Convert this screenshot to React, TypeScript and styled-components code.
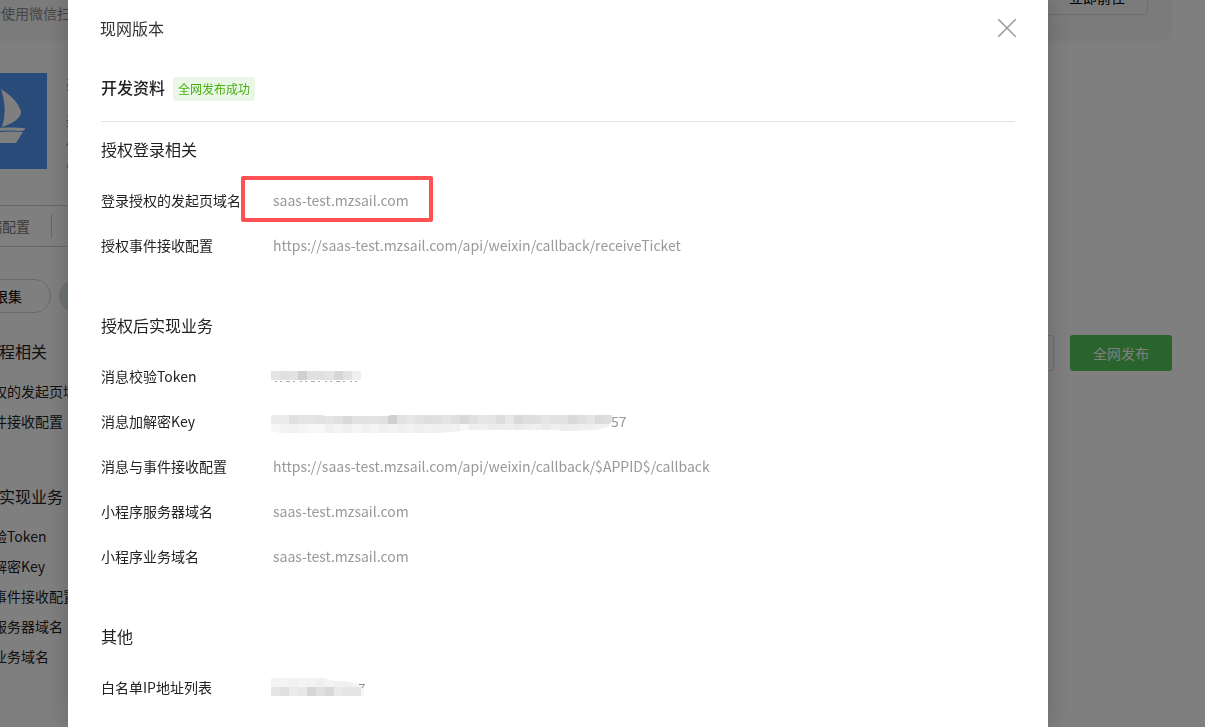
import React from 'react';
import styled, { createGlobalStyle } from 'styled-components';

const Global = createGlobalStyle`
  * { box-sizing: border-box; }
  body {
    margin: 0;
    background: #fff;
    color: #000;
    font-family: "Noto Sans CJK SC", sans-serif;
    font-size: 14px;
    line-height: 20px;
  }
  h1, h2, h3, p, dl, dt, dd { margin: 0; font-weight: 400; }
  button { font-family: inherit; cursor: pointer; }
`;

const Viewport = styled.div`
  position: relative;
  height: 100vh;
  overflow: hidden;
`;

const Page = styled.main`
  margin: -47px 33px 0 -49px;
`;

const Banner = styled.section`
  display: flex;
  align-items: center;
  justify-content: space-between;
  height: 88px;
  padding: 0 24px 0 36px;
  border-radius: 8px;
  background: #f7f7f7;
`;

const BannerText = styled.div`
  padding-top: 32px;
  color: #8a8a8a;
  line-height: 24px;
`;

const OutlineButton = styled.button`
  height: 36px;
  padding: 0 22px;
  border: 1px solid #dcdcdc;
  border-radius: 3px;
  background: transparent;
  color: #000;
  font-size: 14px;
`;

const Profile = styled.section`
  display: flex;
  gap: 19px;
  margin-top: 32px;
`;

const Logo = styled.svg`
  flex: none;
  width: 96px;
  height: 96px;
`;

const ProfileText = styled.div`
  display: grid;
  grid-template-rows: 36px 22px 22px 16px;
  color: #9a6a3a;
`;

const TabBar = styled.nav`
  display: flex;
  align-items: center;
  height: 42px;
  margin: 36px 160px 0 0;
  border: solid #d0d0d0;
  border-width: 1px 0;
`;

const Tab = styled.a`
  padding: 2px 21px 2px 23px;
  border-right: 1px solid #d0d0d0;
  color: #777;
  text-decoration: none;
`;

const Pills = styled.div`
  display: flex;
  gap: 8px;
  margin-top: 32px;
`;

const Pill = styled.button<{ $on?: boolean }>`
  height: 34px;
  padding: 0 28px;
  border: 1px solid ${(p) => (p.$on ? '#dcebdc' : '#d4d4d4')};
  border-radius: 17px;
  background: ${(p) => (p.$on ? '#dcebdc' : 'transparent')};
  color: #000;
  font-size: 14px;
`;

const PageHeading = styled.div`
  display: flex;
  justify-content: space-between;
  height: 36px;
  margin-top: 22px;
`;

const PageTitle = styled.h2`
  font-size: 16px;
  line-height: 32px;
  color: #222;
`;

const Actions = styled.div`
  display: flex;
  gap: 16px;
`;

const PublishButton = styled.button`
  height: 36px;
  padding: 0 23px;
  border: 0;
  border-radius: 3px;
  background: #50c856;
  color: #fff;
  font-size: 14px;
`;

const PageList = styled.div`
  display: grid;
  gap: 10px;
  margin: 10px 0 49px;
  color: #222;
`;

const Backdrop = styled.div`
  position: fixed;
  inset: 0;
  display: flex;
  padding: 0 157px 0 68px;
  background: rgba(0, 0, 0, 0.5);
`;

const Dialog = styled.section`
  flex: 1;
  padding: 16px 32px 0;
  background: #fff;
  box-shadow: 0 0 24px rgba(0, 0, 0, 0.2);
  color: #222;
  overflow: hidden;
`;

const DialogHeader = styled.header`
  display: flex;
  align-items: center;
  justify-content: space-between;
  height: 24px;
`;

const DialogTitle = styled.h1`
  font-size: 16px;
  line-height: 24px;
  color: #353535;
`;

const CloseButton = styled.button`
  display: flex;
  padding: 0;
  border: 0;
  background: none;
  color: #999;
`;

const DialogBody = styled.div`
  padding: 0 1px;
`;

const Summary = styled.div`
  display: flex;
  align-items: flex-start;
  gap: 8px;
  margin-top: 37px;
  padding-bottom: 20px;
  border-bottom: 1px solid #e4e5e7;
`;

const SummaryTitle = styled.h2`
  font-size: 16px;
  font-weight: 500;
  line-height: 20px;
`;

const Tag = styled.span`
  padding: 0 5px;
  border-radius: 3px;
  background: #ebf7e6;
  color: #46b011;
  font-size: 12px;
  line-height: 24px;
`;

const Group = styled.section`
  margin: 15px 0 58px;
`;

const GroupTitle = styled.h3`
  margin-bottom: 29px;
  font-size: 16px;
  line-height: 24px;
`;

const Rows = styled.dl`
  display: grid;
  gap: 25px;
`;

const Row = styled.div`
  display: flex;
  align-items: center;
  height: 20px;
`;

const Label = styled.dt`
  width: 172px;
  white-space: nowrap;
`;

const Value = styled.dd`
  position: relative;
  display: flex;
  align-items: center;
  color: #999;
`;

const Highlight = styled.span`
  position: absolute;
  inset: -14px -24px -12px -32px;
  border: 4px solid #ff5053;
  border-radius: 2px;
`;

const Mosaic = styled.svg`
  flex: none;
  margin: 0 -2px;
`;

const CELL = 9;

type Shade = { top: number[]; bottom: number[] };

const gray = (v: number) => `rgb(${v}, ${v}, ${v})`;

const Cells = ({ top, bottom }: Shade) => (
  <>
    {[top, bottom].map((row, r) =>
      row.map((v, i) => (
        <rect key={`${r}-${i}`} x={i * CELL} y={r * CELL} width={CELL} height={CELL} fill={gray(v)} />
      )),
    )}
  </>
);

const TOKEN = [228, 224, 226, 208, 224, 224, 228, 215, 226, 240];
const KEY: Shade = {
  top: [236, 236, 224, 228, 229, 226, 229, 224, 218, 226, 226, 227, 225, 208, 226, 231, 226, 223, 224, 229, 223, 216, 224, 231, 229, 221, 231, 218, 222, 223, 229, 226, 226, 218, 223, 229, 219, 221],
  bottom: [246, 243, 241, 245, 247, 248, 240, 244, 240, 245, 241, 244, 240, 243, 240, 242, 238, 241, 240, 240, 241, 248, 238, 240, 236, 237, 238, 235, 238, 240, 235, 240, 236, 237, 240, 238, 241, 241],
};
const IP: Shade = {
  top: [243, 244, 241, 244, 243, 240, 243, 240, 241, 243, 244],
  bottom: [229, 224, 235, 232, 214, 224, 216, 233, 229, 229, 247],
};

const TokenMosaic = () => (
  <Mosaic width="92" height="16" viewBox="0 0 92 16" aria-label="已隐藏">
    <g transform="translate(0 3)">
      <Cells top={TOKEN} bottom={[]} />
      <path d="M4 10.500H87" stroke="#aaa" strokeDasharray="2 3 2 4 4 3 2 5" />
    </g>
  </Mosaic>
);

const KeyMosaic = () => (
  <Mosaic width="342" height="24" viewBox="0 0 342 24" aria-label="已隐藏">
    <clipPath id="keyShape">
      <path d="M0 0H50L54 1H116L120 0H341Q342 8 335 13Q325 16 290 16V15H198Q190 16 168 18H8Q2 17 0 14Z" />
    </clipPath>
    <g transform="translate(0 6)" clipPath="url(#keyShape)">
      <Cells {...KEY} />
    </g>
  </Mosaic>
);

const IpMosaic = () => (
  <Mosaic width="96" height="18" viewBox="0 0 96 18" aria-label="已隐藏">
    <clipPath id="ipShape">
      <path d="M0 0H52L64 3H74L88 6L93 10V18H0Z" />
    </clipPath>
    <g clipPath="url(#ipShape)">
      <Cells {...IP} />
    </g>
    <path d="M88 6.500H93.500L91 10" fill="none" stroke="#888" />
  </Mosaic>
);

const BoatLogo = () => (
  <Logo viewBox="0 0 96 96" role="img" aria-label="帆船">
    <rect width="96" height="96" fill="#5097f2" />
    <path d="M50 16Q66 26 70 38Q71 47 51 54Q57 36 50 16Z" fill="#fff" />
    <path d="M44 22Q32 36 28 52H44Z" fill="#fff" />
    <path d="M22 58Q50 53 74 55Q74 58 70 58Q46 56 22 62Z" fill="#fff" />
    <path d="M22 63Q50 57 72 59L65 70H32Z" fill="#fff" />
  </Logo>
);

type Item = { label: string; value: React.ReactNode };

const groups: { title: string; items: Item[] }[] = [
  {
    title: '授权登录相关',
    items: [
      { label: '登录授权的发起页域名', value: <>saas-test.mzsail.com<Highlight /></> },
      { label: '授权事件接收配置', value: 'https://saas-test.mzsail.com/api/weixin/callback/receiveTicket' },
    ],
  },
  {
    title: '授权后实现业务',
    items: [
      { label: '消息校验Token', value: <TokenMosaic /> },
      { label: '消息加解密Key', value: <><KeyMosaic />57</> },
      { label: '消息与事件接收配置', value: 'https://saas-test.mzsail.com/api/weixin/callback/$APPID$/callback' },
      { label: '小程序服务器域名', value: 'saas-test.mzsail.com' },
      { label: '小程序业务域名', value: 'saas-test.mzsail.com' },
    ],
  },
  { title: '其他', items: [{ label: '白名单IP地址列表', value: <IpMosaic /> }] },
];

export default function App() {
  return (
    <Viewport>
      <Global />
      <Page>
        <Banner>
          <BannerText>请使用微信扫</BannerText>
          <OutlineButton>立即前往</OutlineButton>
        </Banner>
        <Profile>
          <BoatLogo />
          <ProfileText>
            <span>美</span>
            <span>美</span>
            <span>小</span>
            <span>小</span>
          </ProfileText>
        </Profile>
        <TabBar>
          <Tab href="#config">前端配置</Tab>
        </TabBar>
        <Pills>
          <Pill>权限集</Pill>
          <Pill $on aria-label="权限集" />
        </Pills>
        <PageHeading>
          <PageTitle>授权流程相关</PageTitle>
          <Actions>
            <OutlineButton aria-label="编辑" />
            <PublishButton>全网发布</PublishButton>
          </Actions>
        </PageHeading>
        <PageList>
          <p>登录授权的发起页域名</p>
          <p>授权事件接收配置</p>
        </PageList>
        <PageHeading>
          <PageTitle>授权后实现业务</PageTitle>
        </PageHeading>
        <PageList>
          {groups[1].items.map((item) => (
            <p key={item.label}>{item.label}</p>
          ))}
        </PageList>
      </Page>
      <Backdrop>
        <Dialog role="dialog" aria-modal="true" aria-labelledby="dialogTitle">
          <DialogHeader>
            <DialogTitle id="dialogTitle">现网版本</DialogTitle>
            <CloseButton aria-label="关闭">
              <svg width="18" height="18" viewBox="0 0 18 18" fill="none" stroke="currentColor" strokeWidth="1.500">
                <path d="M0 0L18 18M18 0L0 18" />
              </svg>
            </CloseButton>
          </DialogHeader>
          <DialogBody>
            <Summary>
              <SummaryTitle>开发资料</SummaryTitle>
              <Tag>全网发布成功</Tag>
            </Summary>
            {groups.map((group) => (
              <Group key={group.title}>
                <GroupTitle>{group.title}</GroupTitle>
                <Rows>
                  {group.items.map((item) => (
                    <Row key={item.label}>
                      <Label>{item.label}</Label>
                      <Value>{item.value}</Value>
                    </Row>
                  ))}
                </Rows>
              </Group>
            ))}
          </DialogBody>
        </Dialog>
      </Backdrop>
    </Viewport>
  );
}
